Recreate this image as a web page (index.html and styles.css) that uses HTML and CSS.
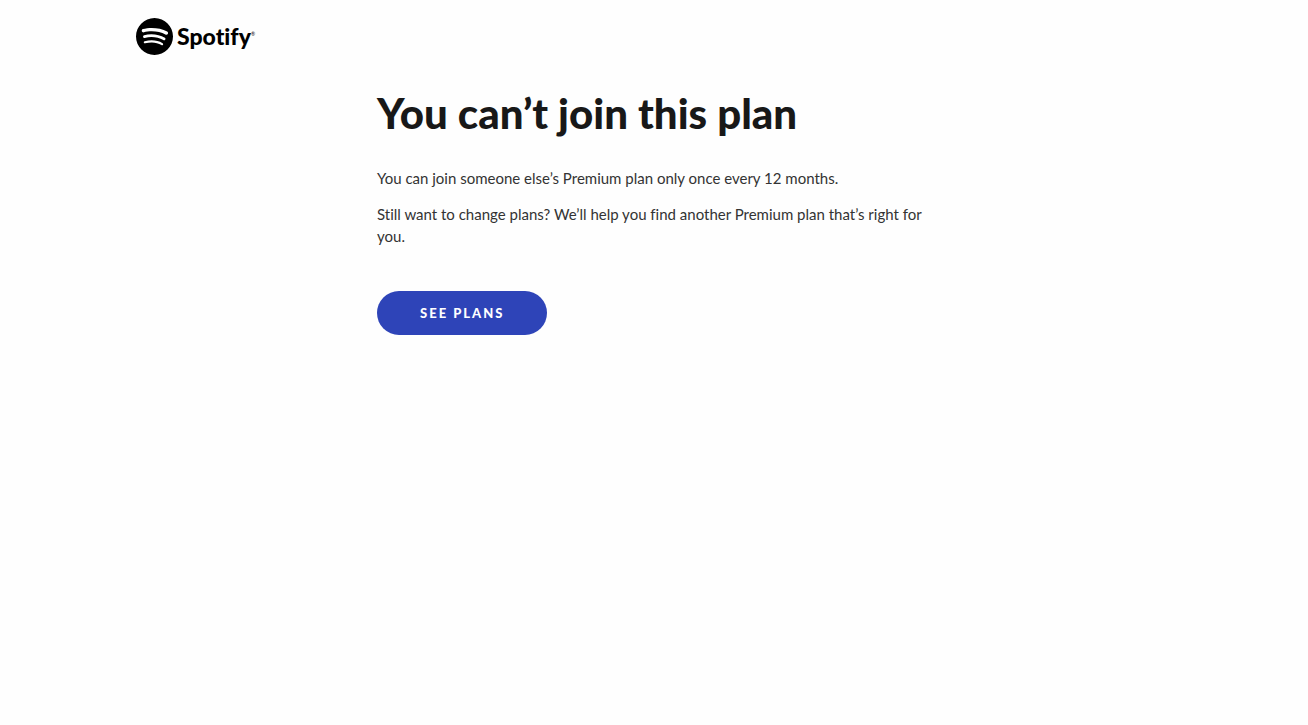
FILE: index.html
```html
<!DOCTYPE html>
<html lang="en">
<head>
  <meta charset="UTF-8">
  <meta name="viewport" content="width=device-width, initial-scale=1.0">
  <title>You can’t join this plan - Spotify</title>
  <link rel="stylesheet" href="styles.css">
</head>
<body>
  <header class="header">
    <a class="logo" href="#">
      <svg class="logo-icon" viewBox="0 0 24 24" aria-hidden="true">
        <path d="M12 0C5.4 0 0 5.4 0 12s5.4 12 12 12 12-5.4 12-12S18.66 0 12 0zm5.521 17.34c-.24.359-.66.48-1.021.24-2.82-1.74-6.36-2.101-10.561-1.141-.418.122-.779-.179-.899-.539-.12-.421.18-.78.54-.9 4.56-1.021 8.52-.6 11.64 1.32.42.18.479.659.301 1.02zm1.44-3.3c-.301.42-.841.6-1.262.3-3.239-1.98-8.159-2.58-11.939-1.38-.479.12-1.02-.12-1.14-.6-.12-.48.12-1.021.6-1.141C9.6 9.9 15 10.561 18.72 12.84c.361.181.54.78.241 1.2zm.12-3.36C15.24 8.4 8.82 8.16 5.16 9.301c-.6.179-1.2-.181-1.38-.721-.18-.601.18-1.2.72-1.381 4.26-1.26 11.28-1.02 15.721 1.621.539.3.719 1.02.419 1.56-.299.421-1.02.599-1.559.3z"/>
      </svg>
      <span class="logo-text">Spotify</span>
      <span class="logo-mark">®</span>
    </a>
  </header>

  <main class="content">
    <h1>You can’t join this plan</h1>
    <p>You can join someone else’s Premium plan only once every 12 months.</p>
    <p>Still want to change plans? We’ll help you find another Premium plan that’s right for you.</p>
    <a class="button" href="#">See plans</a>
  </main>
</body>
</html>
```

FILE: styles.css
```css
body {
  margin: 0;
  background: #fefefe;
  color: #181818;
  font-family: Lato, "Liberation Sans", sans-serif;
  font-variant-ligatures: none;
}
.header {
  max-width: 1036px;
  margin: 0 auto;
  padding: 18px 24px;
}
.logo {
  display: inline-flex;
  align-items: center;
  color: #000;
  text-decoration: none;
}
.logo-icon {
  width: 37px;
  height: 37px;
  margin-right: 4px;
}
.logo-text {
  font-size: 23px;
  font-weight: 900;
  line-height: 37px;
}
.logo-mark {
  font-size: 5px;
  line-height: 5px;
  margin-bottom: 5px;
}
.content {
  max-width: 554px;
  margin: 0 auto;
  padding: 11px 24px;
}
h1 {
  margin: 0 0 28px;
  font-size: 42px;
  font-weight: 900;
  line-height: 52px;
}
p {
  margin: 0 0 14px;
  color: #333;
  font-size: 15px;
  line-height: 22px;
}
.button {
  display: inline-block;
  margin-top: 30px;
  padding: 0 43px;
  border-radius: 22px;
  background: #2e44b8;
  color: #fff;
  font-size: 13px;
  font-weight: 900;
  line-height: 44px;
  letter-spacing: 2px;
  text-decoration: none;
  text-transform: uppercase;
}
```
